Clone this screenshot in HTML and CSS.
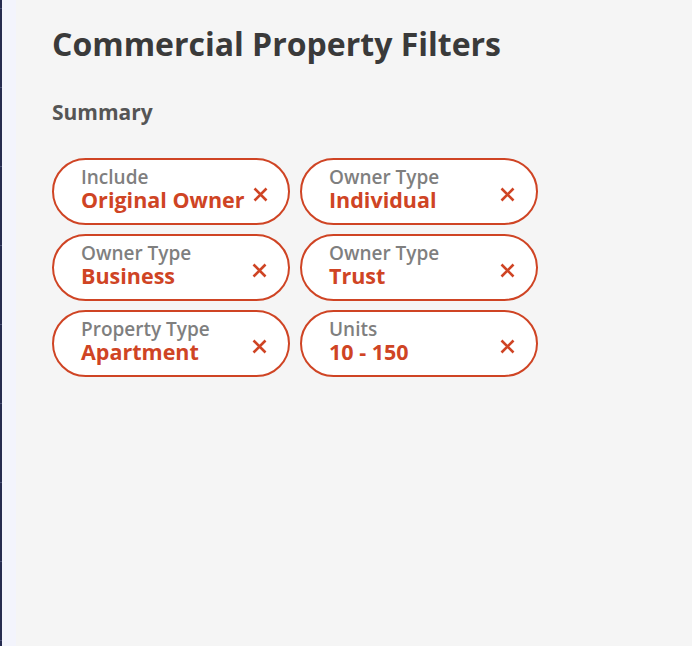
FILE: index.html
```html
<!DOCTYPE html>
<html lang="en">
<head>
    <meta charset="UTF-8">
    <meta name="viewport" content="width=device-width, initial-scale=1.0">
    <title>Commercial Property Filters</title>
    <link rel="stylesheet" href="styles.css">
</head>
<body>
    <div class="edge"></div>
    <div class="rail"></div>
    <div class="panel">
        <h1>Commercial Property Filters</h1>
        <h2>Summary</h2>

        <div class="chips">
            <div class="chip">
                <div class="chip-text">
                    <span class="chip-label">Include</span>
                    <span class="chip-value">Original Owner</span>
                </div>
                <button class="chip-remove" aria-label="Remove">
                    <svg viewBox="0 0 15 15" width="15" height="15"><path d="M1.5 1.5L13.5 13.5M13.5 1.5L1.5 13.5"/></svg>
                </button>
            </div>
            <div class="chip">
                <div class="chip-text">
                    <span class="chip-label">Owner Type</span>
                    <span class="chip-value">Individual</span>
                </div>
                <button class="chip-remove" aria-label="Remove">
                    <svg viewBox="0 0 15 15" width="15" height="15"><path d="M1.5 1.5L13.5 13.5M13.5 1.5L1.5 13.5"/></svg>
                </button>
            </div>
            <div class="chip">
                <div class="chip-text">
                    <span class="chip-label">Owner Type</span>
                    <span class="chip-value">Business</span>
                </div>
                <button class="chip-remove" aria-label="Remove">
                    <svg viewBox="0 0 15 15" width="15" height="15"><path d="M1.5 1.5L13.5 13.5M13.5 1.5L1.5 13.5"/></svg>
                </button>
            </div>
            <div class="chip">
                <div class="chip-text">
                    <span class="chip-label">Owner Type</span>
                    <span class="chip-value">Trust</span>
                </div>
                <button class="chip-remove" aria-label="Remove">
                    <svg viewBox="0 0 15 15" width="15" height="15"><path d="M1.5 1.5L13.5 13.5M13.5 1.5L1.5 13.5"/></svg>
                </button>
            </div>
            <div class="chip">
                <div class="chip-text">
                    <span class="chip-label">Property Type</span>
                    <span class="chip-value">Apartment</span>
                </div>
                <button class="chip-remove" aria-label="Remove">
                    <svg viewBox="0 0 15 15" width="15" height="15"><path d="M1.5 1.5L13.5 13.5M13.5 1.5L1.5 13.5"/></svg>
                </button>
            </div>
            <div class="chip">
                <div class="chip-text">
                    <span class="chip-label">Units</span>
                    <span class="chip-value">10 - 150</span>
                </div>
                <button class="chip-remove" aria-label="Remove">
                    <svg viewBox="0 0 15 15" width="15" height="15"><path d="M1.5 1.5L13.5 13.5M13.5 1.5L1.5 13.5"/></svg>
                </button>
            </div>
        </div>
    </div>
</body>
</html>
```

FILE: styles.css
```css
html, body {
    height: 100%;
}
body {
    margin: 0;
    display: flex;
    font-family: "Open Sans", Lato, sans-serif;
    background-color: #f5f5f5;
}
.edge {
    width: 2px;
    flex-shrink: 0;
    background-color: #262c50;
    background-image: repeating-linear-gradient(to bottom, transparent 0, transparent 8px, #4a5075 8px, #4a5075 9px, transparent 9px, transparent 79px);
}
.rail {
    width: 14px;
    flex-shrink: 0;
    background-color: #f3f4fc;
}
.panel {
    flex: 1;
    padding: 24px 36px;
}
h1 {
    margin: 0;
    color: #3a3a3a;
    font-size: 32px;
    font-weight: bold;
    line-height: 40px;
}
h2 {
    margin: 35px 0 0;
    color: #555;
    font-size: 21px;
    font-weight: bold;
    line-height: 26px;
}
.chips {
    display: grid;
    grid-template-columns: 238px 238px;
    gap: 9px 10px;
    margin-top: 33px;
}
.chip {
    display: flex;
    align-items: center;
    height: 67px;
    box-sizing: border-box;
    padding: 0 21px 0 27px;
    background: white;
    border: 2px solid #cf4424;
    border-radius: 34px;
}
.chip-text {
    flex: 1;
    display: flex;
    flex-direction: column;
    margin-top: -6px;
    white-space: nowrap;
}
.chip-label {
    color: #7f7f7f;
    font-size: 19px;
    font-weight: 600;
    line-height: 22px;
}
.chip-value {
    color: #cf4424;
    font-size: 21.5px;
    font-weight: bold;
    line-height: 24px;
}
.chip-remove {
    padding: 0;
    border: none;
    background: none;
    cursor: pointer;
    display: flex;
    margin: 6px 0 0 8px;
}
.chip-remove svg {
    fill: none;
    stroke: #cf4424;
    stroke-width: 2.6;
}
```
